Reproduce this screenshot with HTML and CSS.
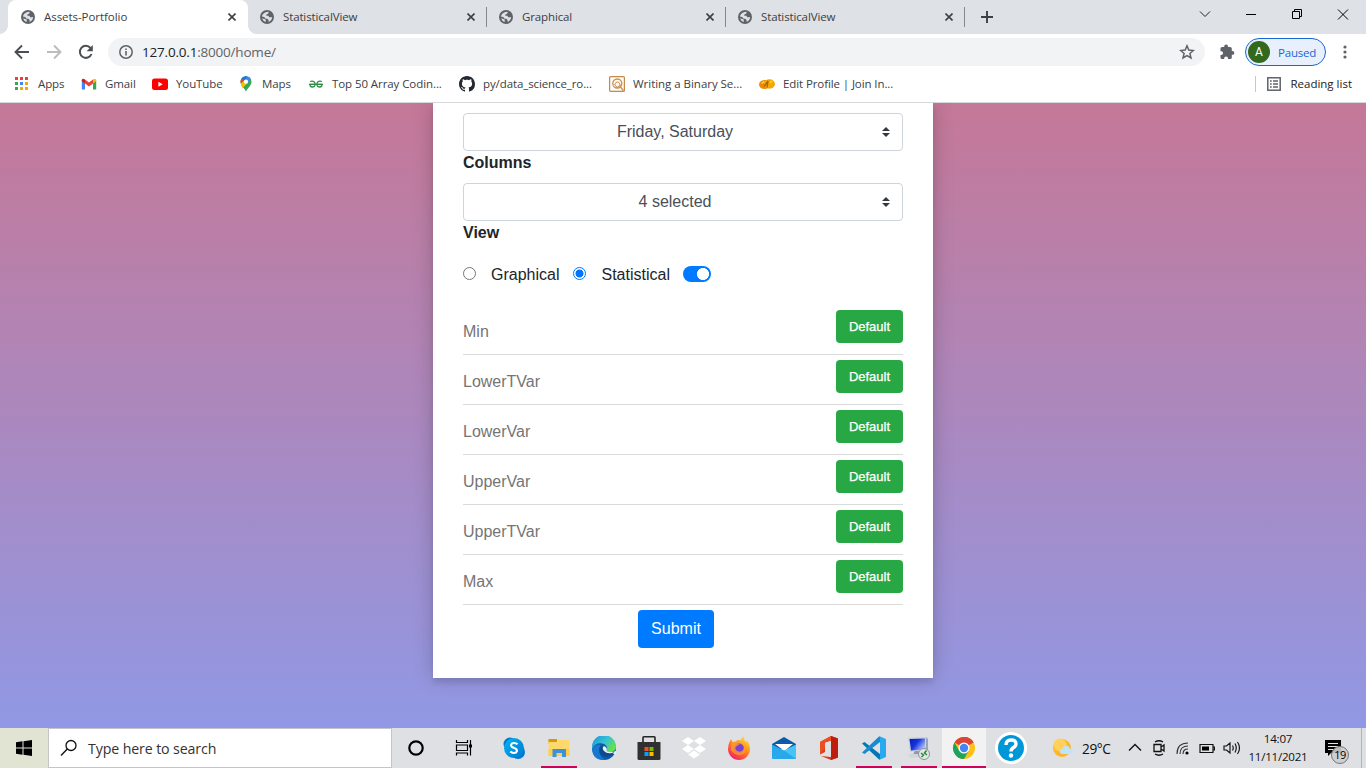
FILE: index.html
```html
<!DOCTYPE html>
<html lang="en">
<head>
<meta charset="utf-8">
<title>Assets-Portfolio</title>
<link rel="stylesheet" href="styles.css">
</head>
<body>
<svg class="defs" width="0" height="0">
  <defs>
    <symbol id="globe" viewBox="0 0 14 14"><circle cx="7" cy="7" r="7" fill="#5f6368"/><path d="M6.600 1.900L8.600 1.800Q8.800 3.600 7.500 4.100L6.300 4.600V5.800H8.300L9.300 7.300H11L12.200 7Q12 10.500 8.600 11.900V10.100L7.200 8.800H5.600L4.200 6.900L1.900 6.500Q2.500 3.200 6.600 1.900ZM2.100 8.200L5.700 9.600V12Q2.900 11.200 2.100 8.200Z" fill="#dee1e6"/></symbol>
    <symbol id="cross" viewBox="0 0 8 8"><path d="M.5.5L7.500 7.500M7.500.5L.5 7.500" stroke="#3c4043" stroke-width="1.600"/></symbol>
    <linearGradient id="sky" x2="1" y2="1"><stop stop-color="#00b7f0"/><stop offset="1" stop-color="#0078d4"/></linearGradient>
    <linearGradient id="edgeTop" x2="1" y2=".6"><stop stop-color="#1b8fd8"/><stop offset=".55" stop-color="#35c1d7"/><stop offset="1" stop-color="#66e04c"/></linearGradient>
    <linearGradient id="fire" x1=".8" y1="0" x2=".2" y2="1"><stop stop-color="#ffe14a"/><stop offset=".45" stop-color="#ff8a1d"/><stop offset="1" stop-color="#f5156c"/></linearGradient>
    <linearGradient id="screen" x2="1" y2=".6"><stop stop-color="#0a1bb5"/><stop offset=".5" stop-color="#1733dc"/><stop offset="1" stop-color="#a9bdf5"/></linearGradient>
  </defs>
</svg>
<div class="desktop">
  <header class="tabstrip">
    <div class="tab tab-active"><svg class="favicon"><use href="#globe"/></svg><span class="tab-title t-assets">Assets-Portfolio</span><svg class="tab-close"><use href="#cross"/></svg></div>
    <div class="tab"><svg class="favicon"><use href="#globe"/></svg><span class="tab-title">StatisticalView</span><svg class="tab-close"><use href="#cross"/></svg></div>
    <div class="tab"><svg class="favicon"><use href="#globe"/></svg><span class="tab-title">Graphical</span><svg class="tab-close"><use href="#cross"/></svg></div>
    <div class="tab"><svg class="favicon"><use href="#globe"/></svg><span class="tab-title">StatisticalView</span><svg class="tab-close"><use href="#cross"/></svg></div>
    <svg class="new-tab" viewBox="0 0 12 12"><path d="M6 0V12M0 6H12" stroke="#3c4043" stroke-width="1.900"/></svg>
    <div class="window-controls">
      <svg viewBox="0 0 46 28"><path d="M18 11.500L23 16.500L28 11.500" fill="none" stroke="#222" /></svg>
      <svg viewBox="0 0 46 28"><path d="M18 14.500H28" stroke="#000"/></svg>
      <svg viewBox="0 0 46 28"><path d="M18.500 11.500H25.500V18.500H18.500ZM20.500 11.500V9.500H27.500V16.500H25.500" fill="none" stroke="#000"/></svg>
      <svg viewBox="0 0 46 28"><path d="M18 9.500L28 19.500M28 9.500L18 19.500" stroke="#000"/></svg>
    </div>
  </header>

  <nav class="toolbar">
    <svg class="nav-icon" viewBox="0 0 16 16"><path d="M15 8H2M8 1.500L1.500 8L8 14.500" fill="none" stroke="#4b4f53" stroke-width="1.900"/></svg>
    <svg class="nav-icon" viewBox="0 0 16 16"><path d="M1 8H14M8 1.500L14.500 8L8 14.500" fill="none" stroke="#babcbe" stroke-width="1.900"/></svg>
    <svg class="nav-icon" viewBox="0 0 16 16"><path d="M13.500 10A6 6 0 1 1 12.500 4" fill="none" stroke="#4b4f53" stroke-width="2"/><path d="M14.800 1V7.200H8.600Z" fill="#4b4f53"/></svg>
    <div class="omnibox">
      <svg class="info" viewBox="0 0 14 14"><circle cx="7" cy="7" r="6.200" fill="none" stroke="#5f6368" stroke-width="1.500"/><path d="M7 6V10.500M7 3.500V5" stroke="#5f6368" stroke-width="1.600"/></svg>
      <span class="url">127.0.0.1<span class="url-path">:8000/home/</span></span>
      <svg class="star" viewBox="0 0 16 16"><path d="M8 1.800L9.800 6.100L14.400 6.500L10.900 9.500L12 14L8 11.600L4 14L5.100 9.500L1.600 6.500L6.200 6.100Z" fill="none" stroke="#5f6368" stroke-width="1.500"/></svg>
    </div>
    <svg class="puzzle" viewBox="0 0 16 16"><path d="M1.500 4.500Q1.500 3 3 3H5.200V2.400A1.900 1.900 0 0 1 9 2.400V3H11.200Q12.800 3 12.800 4.500V7H13.400A1.900 1.900 0 0 1 13.400 10.800H12.800V13.500Q12.800 15 11.200 15H9V14.300A1.900 1.900 0 0 0 5.200 14.300V15H3Q1.500 15 1.500 13.500V11H2.200A1.900 1.900 0 0 0 2.200 7.200H1.500Z" fill="#5f6368"/></svg>
    <div class="profile"><span class="avatar">A</span><span class="paused">Paused</span></div>
    <svg class="kebab" viewBox="0 0 4 14"><g fill="#5f6368"><circle cx="2" cy="2" r="1.600"/><circle cx="2" cy="7" r="1.600"/><circle cx="2" cy="12" r="1.600"/></g></svg>
  </nav>

  <nav class="bookmarks">
    <div class="bookmark b-apps"><svg viewBox="0 0 16 16"><g fill="#ea4335"><path d="M1 1h3v3H1zM6 1h3v3H6zM11 1h3v3h-3z"/></g><path d="M1 6h3v3H1zM1 11h3v3H1z" fill="#34a853"/><path d="M6 6h3v3H6z" fill="#4285f4"/><path d="M11 6h3v3h-3zM6 11h3v3H6zM11 11h3v3h-3z" fill="#f4a900"/></svg><span>Apps</span></div>
    <div class="bookmark b-gmail"><svg viewBox="0 0 16 16"><path d="M.8 4V13.500H4V7Z" fill="#4285f4"/><path d="M12 7V13.500H15.200V4Z" fill="#34a853"/><path d="M4 3.500L8 6.600L12 3.500V7.600L8 10.600L4 7.600Z" fill="#ea4335"/><path d="M.8 5.200V4Q1.500 1.700 4 3.500V7.600Z" fill="#c5221f"/><path d="M15.200 5.200V4Q14.500 1.700 12 3.500V7.600Z" fill="#fbbc04"/></svg><span>Gmail</span></div>
    <div class="bookmark b-youtube"><svg viewBox="0 0 16 16"><rect y="2.500" width="16" height="11.500" rx="2.500" fill="#f00"/><path d="M6.400 5.800V10.700L10.700 8.250Z" fill="#fff"/></svg><span>YouTube</span></div>
    <div class="bookmark b-maps"><svg viewBox="0 0 16 16"><path d="M8 16C7.400 12.500 2.500 10 2.500 5.700A5.500 5.500 0 0 1 13.500 5.700C13.500 10 8.600 12.500 8 16Z" fill="#34a853"/><path d="M2.800 7.600A5.600 5.600 0 0 1 3.700 2.200L6.400 4.500Z" fill="#ea4335"/><path d="M3.700 2.200A5.500 5.500 0 0 1 9.700.5L6.400 4.500Z" fill="#1a73e8"/><path d="M9.700.5A5.500 5.500 0 0 1 12.900 3.200L9.500 7.200L6.400 4.500Z" fill="#4285f4"/><path d="M9.500 7.200L4.500 12Q2.900 9.500 2.800 7.600L6.400 4.500Z" fill="#fbbc04"/><circle cx="8" cy="5.700" r="2.100" fill="#fff"/></svg><span>Maps</span></div>
    <div class="bookmark b-array"><svg viewBox="0 0 16 16"><path d="M2 5.500C5.500 4.500 7.500 6 7 9C6.500 12 2 11.500 2 8.400H14C14 11.500 9.500 12 9 9C8.500 6 10.500 4.500 14 5.500" fill="none" stroke="#2f8d46" stroke-width="1.300"/><path d="M1 8.300H15" stroke="#2f8d46" stroke-width="1.100"/></svg><span>Top 50 Array Codin...</span></div>
    <div class="bookmark b-github"><svg viewBox="0 0 16 16"><path fill="#24292f" d="M8 0C3.580 0 0 3.580 0 8c0 3.540 2.290 6.530 5.470 7.590.4.070.55-.17.550-.380 0-.190-.010-.820-.010-1.490-2.010.370-2.530-.490-2.690-.940-.090-.230-.480-.940-.820-1.130-.280-.150-.680-.520-.010-.530.630-.010 1.080.580 1.230.820.720 1.210 1.870.870 2.330.660.070-.520.280-.870.510-1.070-1.780-.2-3.640-.890-3.640-3.950 0-.870.310-1.590.820-2.150-.080-.2-.360-1.020.080-2.120 0 0 .670-.210 2.200.820.640-.180 1.320-.270 2-.270s1.360.090 2 .270c1.530-1.040 2.200-.820 2.200-.820.440 1.100.160 1.920.080 2.120.510.560.820 1.270.820 2.150 0 3.070-1.870 3.750-3.650 3.950.290.250.540.730.540 1.480 0 1.070-.010 1.930-.010 2.200 0 .210.150.460.550.380A8 8 0 0 0 16 8c0-4.420-3.580-8-8-8"/></svg><span>py/data_science_ro...</span></div>
    <div class="bookmark b-writing"><svg viewBox="0 0 16 16"><rect x=".6" y=".6" width="14.800" height="14.800" rx="1" fill="#fffaf3" stroke="#bf8a4c" stroke-width="1.200"/><circle cx="8.300" cy="7.500" r="4.500" fill="none" stroke="#c79150" stroke-width="1.300"/><path d="M10 10.500A2.500 2.500 0 1 1 10.500 7Q10.500 11 15 14.500M10 9L14 15" fill="none" stroke="#c79150"/></svg><span>Writing a Binary Se...</span></div>
    <div class="bookmark b-edit"><svg viewBox="0 0 16 16"><ellipse cx="5.500" cy="8.500" rx="5.500" ry="4.500" fill="#ed8b00"/><ellipse cx="10.500" cy="8" rx="5.500" ry="4.700" fill="#f5a800"/><path d="M5 10.500L9 5L8 11.500" stroke="#a76400" stroke-width="1.300" fill="none"/><path d="M2.500 7.500L5.500 5.500M11 6.500L13 5.500" stroke="#ffd33d" stroke-width="1.500"/></svg><span>Edit Profile | Join In...</span></div>
    <div class="reading"><svg viewBox="0 0 14 14"><rect x=".8" y=".8" width="12.400" height="12.400" fill="none" stroke="#5f6368" stroke-width="1.500"/><path d="M3 4H4.700M3 7H4.700M3 10H4.700M6 4H11M6 7H11M6 10H11" stroke="#5f6368" stroke-width="1.400"/></svg><span>Reading list</span></div>
  </nav>

  <main class="page">
    <form class="card">
      <button type="button" class="select">Friday, Saturday<svg viewBox="0 0 4 5"><path fill="#343a40" d="M2 0L0 2h4zm0 5L0 3h4z"/></svg></button>
      <div class="label">Columns</div>
      <button type="button" class="select">4 selected<svg viewBox="0 0 4 5"><path fill="#343a40" d="M2 0L0 2h4zm0 5L0 3h4z"/></svg></button>
      <div class="label">View</div>
      <div class="choices"><i class="radio"></i><span class="c-graph">Graphical</span><i class="radio checked"></i><span class="c-stat">Statistical</span><i class="switch"></i></div>
      <div class="fields">
        <div class="field"><span>Min</span><button type="button" class="default">Default</button></div>
        <div class="field"><span>LowerTVar</span><button type="button" class="default">Default</button></div>
        <div class="field"><span>LowerVar</span><button type="button" class="default">Default</button></div>
        <div class="field"><span>UpperVar</span><button type="button" class="default">Default</button></div>
        <div class="field"><span>UpperTVar</span><button type="button" class="default">Default</button></div>
        <div class="field"><span>Max</span><button type="button" class="default">Default</button></div>
      </div>
      <button type="button" class="submit">Submit</button>
    </form>
  </main>

  <footer class="taskbar">
    <div class="start"><svg viewBox="0 0 16 16"><path d="M0 2.200L6.500 1.300V7.500H0ZM7.500 1.150L16 0V7.500H7.500ZM0 8.500H6.500V14.700L0 13.800ZM7.500 8.500H16V16L7.500 14.850Z"/></svg></div>
    <div class="search"><svg viewBox="0 0 18 18"><circle cx="11" cy="6.500" r="5" fill="none" stroke="#111" stroke-width="1.300"/><path d="M7.300 10L1 16.500" stroke="#111" stroke-width="1.400"/></svg><span>Type here to search</span></div>
    <div class="sys-cell"><svg viewBox="0 0 24 24"><circle cx="12" cy="12" r="6.700" fill="none" stroke="#000" stroke-width="2.200"/></svg></div>
    <div class="sys-cell sys-view"><svg viewBox="0 0 24 24"><path d="M4.500 4V6.500H15.500V4M4.500 19.500V17H15.500V19.500M4.500 9H15.500V14.500H4.500ZM18.500 4V19.500" fill="none" stroke="#000" stroke-width="1.200"/><path d="M17 8.500H20V11.500H17Z"/></svg></div>
    <div class="app"><svg viewBox="0 0 24 24"><circle cx="8" cy="8" r="6.500" fill="#0078d4"/><circle cx="16" cy="16" r="7" fill="#0078d4"/><circle cx="12" cy="12" r="10" fill="url(#sky)"/><path d="M15.500 8.300Q14 6.900 11.800 7C9 7.100 8.100 9.800 10 11L13.500 12.600C16 14 15 16.900 12 17Q9.800 17.100 8.300 15.600" fill="none" stroke="#fff" stroke-width="2.100"/></svg></div>
    <div class="app running"><svg viewBox="0 0 24 24"><path d="M1.500 3H10V8H1.500Z" fill="#d99a00"/><path d="M1.500 6H10L11.500 4H22.500V20H1.500Z" fill="#ffd86b"/><path d="M1.500 13H22.500V20H1.500Z" fill="#ffcf4c"/><path d="M5.500 21V13H19V21H15V17H9.500V21Z" fill="#3c91d8"/></svg></div>
    <div class="app"><svg viewBox="0 0 24 24"><circle cx="12" cy="12" r="12" fill="#0c59a4"/><path d="M0 11A12 12 0 0 1 24 11C24 16 18 17 14 15C17 12 14 8 10 7.500Q3 6.500 0 13Z" fill="url(#edgeTop)"/><path d="M0 13Q4 7 9 9C5 13 7 21 14 23.500Q1 26 0 13Z" fill="#1678d1"/><path d="M10.500 10C9 15 15 19 22 17C18 23 7 21 7.500 14Q8 10.500 10.500 10Z" fill="#114a8b"/><path d="M12 10Q9.500 12 12 15Q16 19 22.500 16L21 18L24 18V15Q19 17 14.500 15Q16 12 12 10Z" fill="#e5f4f7"/></svg></div>
    <div class="app"><svg viewBox="0 0 24 24"><path d="M6 8V1.500Q6 .8 6.800.8H17.200Q18 .8 18 1.500V8" fill="none" stroke="#252525" stroke-width="1.600"/><path d="M.5 6H23.500V22.500Q23.500 24 22 24H2Q.5 24 .5 22.500Z" fill="#303030"/><path d="M7.500 11H11.500V15H7.500Z" fill="#f25022"/><path d="M12.500 11H16.500V15H12.500Z" fill="#7fba00"/><path d="M7.500 16H11.500V20H7.500Z" fill="#00a4ef"/><path d="M12.500 16H16.500V20H12.500Z" fill="#ffb900"/></svg></div>
    <div class="app"><svg viewBox="0 0 24 24"><path d="M6 1L12 5L6 9L0 5ZM18 1L24 5L18 9L12 5ZM6 9L12 13L6 17L0 13ZM18 9L24 13L18 17L12 13ZM12 14.500L18 18.500L12 22.500L6 18.500Z" fill="#fff"/></svg></div>
    <div class="app"><svg viewBox="0 0 24 24"><path d="M2.500 6L4 3L5.500 6L9 5.500C10 4 12 3 13.500 4.500Q14 2 16.500 0Q17 4 19 6L20 4.500Q23 8 23 13A11 11 0 0 1 1 13Q1 9 2.500 6Z" fill="url(#fire)"/><circle cx="12" cy="12.500" r="5" fill="#7b3fd8"/><path d="M4 7Q7 5 9 7L13 8L10 10Q7 12 9.500 14.500Q13 17 16 14Q18 11 15.500 8Q20 9 19 14C17 21 7 20 4 14Z" fill="#ff9f24" opacity=".75"/></svg></div>
    <div class="app"><svg viewBox="0 0 24 24"><path d="M0 8L12 1L24 8V13H0Z" fill="#0c5aa8"/><path d="M3 8H21L12.500 15Z" fill="#fff"/><path d="M0 8.500L13 15L0 23Z" fill="#28a8ea"/><path d="M24 8.500V23H0L12 14.500Z" fill="#45c4f5"/><path d="M0 23L12 14.500L24 23Z" fill="#28a8ea"/></svg></div>
    <div class="app"><svg viewBox="0 0 24 24"><path d="M3 6L14 0L21 2.500V21.500L14 24L4 20L14 21V4.500L8 6.500V16L3 18.500Z" fill="#db3a1a"/><path d="M14 0L21 2.500V21.500L14 24Z" fill="#bd1e0d"/><path d="M3 6L14 0V4.500L8 6.500V12L3 18.500Z" fill="#e94f20"/></svg></div>
    <div class="app running"><svg viewBox="0 0 24 24"><path d="M0 7.500L2.500 6L18 18V23.500H17Z" fill="#0078b8"/><path d="M0 16.500L2.500 18L18 6V.5H17Z" fill="#168bd1"/><path d="M17 0L24 3V21L17 24Q18 23.500 18 22V2Q18 .5 17 0Z" fill="#29aaf0"/></svg></div>
    <div class="app running"><svg viewBox="0 0 24 24"><path d="M1 1.500L19 1V15L3 16Z" fill="#c9d2dd"/><path d="M2.500 3L18 2.500V13.500L4 14.500Z" fill="url(#screen)"/><path d="M19 1L21 3V15L19 15Z" fill="#9ba6b4"/><path d="M8 15L13 15V18L16 20H5Z" fill="#9299a3"/><path d="M1 18L12 18L14 21L3 22Z" fill="#d2d6dc"/><circle cx="17" cy="18" r="5.500" fill="#e4e7ea" stroke="#8b9299"/><path d="M14 17L16.500 19L14.500 21M19.500 14.500L17.500 17L20 19" fill="none" stroke="#238a31" stroke-width="1.500"/></svg></div>
    <div class="app chrome running"><svg viewBox="0 0 24 24"><circle cx="12" cy="12" r="11" fill="#fbc116"/><path d="M12 12L2.470 6.500A11 11 0 0 1 21.530 6.500Z" fill="#db4437"/><path d="M12 6.500H21.500Q19 1 12 1Z" fill="#db4437"/><path d="M2.470 6.500A11 11 0 0 0 12 23L16.760 14.750L12 12L7.240 14.750Z" fill="#1da260"/><circle cx="12" cy="12" r="5.500" fill="#fff"/><circle cx="12" cy="12" r="4.200" fill="#4285f4"/></svg></div>
    <div class="help"><svg viewBox="0 0 32 32"><circle cx="16" cy="16" r="16" fill="#fff"/><circle cx="16" cy="16" r="13" fill="#0097d8"/><path d="M11 13Q11 8 16 8Q21 8 21 12Q21 14 18.500 15.500Q16 17 16 19.500" fill="none" stroke="#fff" stroke-width="3.400"/><circle cx="16" cy="23.500" r="2.200" fill="#fff"/></svg></div>
    <div class="weather"><svg viewBox="0 0 20 20"><circle cx="9" cy="10" r="9" fill="#fdb62b"/><circle cx="7" cy="7" r="6.500" fill="#ffd15a"/><path d="M10 16Q6.500 16 7 13Q7.500 11 9.500 11Q11 6 15 8Q16.500 9 16.500 10.500Q20 10.500 20 13.500Q19.500 16 17 16Z" fill="#bfe3fb"/></svg><span>29°C</span></div>
    <div class="tray">
      <svg viewBox="0 0 16 16"><path d="M2 10.500L8 4.500L14 10.500" fill="none" stroke="#111" stroke-width="1.400"/></svg>
      <svg viewBox="0 0 16 16"><path d="M3 4.500H10V11.500H3ZM10 7L13 5V11L10 9M4 2Q8-.5 12 2M4 14Q8 16.500 12 14" fill="none" stroke="#111" stroke-width="1.300"/></svg>
      <svg viewBox="0 0 16 16"><path d="M2 14Q2 3 13 3M5 14Q5 6 13 6M8 14Q8 9 13 9" fill="none" stroke="#333" stroke-width="1.100"/><circle cx="12" cy="13" r="1.600"/></svg>
      <svg viewBox="0 0 16 16"><path d="M1 4.500H14V12.500H1ZM14 7H15.500V10H14" fill="none" stroke="#111" stroke-width="1.200"/><path d="M3 6.500H10V10.500H3Z"/></svg>
      <svg class="volume" viewBox="0 0 18 16"><path d="M1 6H3.500L7 3V13L3.500 10H1ZM9.500 5.500Q11 8 9.500 10.500M12 3.500Q14.500 8 12 12.500M14.500 2Q18.500 8 14.500 14" fill="none" stroke="#111" stroke-width="1.150"/></svg>
    </div>
    <div class="clock"><span class="time">14:07</span><span class="date">11/11/2021</span></div>
    <div class="notify"><svg viewBox="0 0 16 16"><path d="M0 0H16V13H6L3 16V13H0Z"/><path d="M3 3.500H13M3 6.500H13M3 9.500H9" stroke="#e3e3e5" stroke-width="1.200"/></svg><span class="badge">19</span></div>
    <div class="peek"></div>
  </footer>
</div>
</body>
</html>
```
FILE: styles.css
```css
* { box-sizing: border-box; }
body { margin: 0; overflow: hidden; font-family: "Open Sans", "Noto Sans", sans-serif; font-size: 11.500px; color: #3c4043; }
svg { display: block; flex: none; }
.defs { position: absolute; }
.desktop { width: 1366px; height: 768px; display: flex; flex-direction: column; background: #fff; }

.tabstrip { height: 34px; flex: none; display: flex; background: #dee1e6; padding-left: 8px; }
.tab { width: 239px; height: 34px; display: flex; align-items: center; padding: 0 12px; position: relative; }
.tab:not(.tab-active)::after { content: ""; position: absolute; right: 0; top: 7px; width: 1px; height: 20px; background: #85888c; }
.tab-active { width: 240px; background: #fff; border-radius: 8px 8px 0 0; padding: 0 12px 0 13px; }
.tab-active::before, .tab-active::after { content: ""; position: absolute; bottom: 0; width: 8px; height: 8px; }
.tab-active::before { left: -8px; background: radial-gradient(circle at 0 0, #dee1e6 7.500px, #fff 8px); }
.tab-active::after { right: -8px; background: radial-gradient(circle at 100% 0, #dee1e6 7.500px, #fff 8px); }
.favicon { width: 14px; height: 14px; margin-right: 9px; }
.tab-title { flex: 1; white-space: nowrap; line-height: 16px; letter-spacing: -.13px; }
.t-assets { letter-spacing: -.05px; }
.tab-close { width: 8px; height: 8px; }
.new-tab { width: 12px; height: 12px; margin: 11px 0 0 16px; }
.window-controls { display: flex; margin-left: auto; }
.window-controls svg { width: 46px; height: 28px; }

.toolbar { height: 36px; flex: none; display: flex; align-items: center; padding-left: 14px; }
.nav-icon { width: 16px; height: 16px; margin-right: 16px; }
.omnibox { width: 1097px; height: 28px; margin-left: -2px; background: #f1f3f4; border-radius: 14px; display: flex; align-items: center; padding: 0 10px 0 11px; }
.info { width: 14px; height: 14px; margin-right: 9px; }
.url { flex: 1; font-size: 13.500px; letter-spacing: -.2px; color: #202124; }
.url-path { color: #5f6368; }
.star { width: 16px; height: 16px; }
.puzzle { width: 16px; height: 16px; margin: 0 10px 0 14px; }
.profile { width: 81px; height: 28px; border: 1px solid #1967d2; border-radius: 14px; background: #e8f0fe; display: flex; align-items: center; padding-left: 2px; }
.avatar { width: 22px; height: 22px; border-radius: 50%; background: #33691e; color: #fff; font: 12px/22px Roboto, sans-serif; text-align: center; margin-right: 8px; }
.paused { color: #1967d2; font-size: 11.500px; letter-spacing: -.2px; }
.kebab { width: 4px; height: 14px; margin-left: 17px; }

.bookmarks { height: 33px; flex: none; display: flex; align-items: center; padding: 0 14px 5px; border-bottom: 1px solid #d6d8db; white-space: nowrap; }
.bookmark { display: flex; align-items: center; gap: 8px; letter-spacing: -.1px; }
.bookmark svg { width: 16px; height: 16px; }
.b-apps { width: 67px; }
.b-gmail { width: 71px; }
.b-youtube { width: 86px; }
.b-maps { width: 70px; }
.b-github, .b-writing { width: 150px; }
.b-writing { letter-spacing: -.03px; }
.b-array { width: 151px; letter-spacing: -.08px; }
.reading { display: flex; align-items: center; gap: 9px; margin-left: auto; height: 16px; padding-left: 11px; border-left: 1px solid #c6c8cb; color: #202124; }
.reading svg { width: 14px; height: 14px; }

.page { height: 625px; flex: none; overflow: hidden; display: flex; justify-content: center; align-items: flex-start; background: linear-gradient(#c57897, #9198e5); }
.card { width: 500px; height: 575px; background: #fff; padding: 10px 30px 30px; box-shadow: 0 0 20px rgba(0, 0, 0, .2), 0 5px 5px rgba(0, 0, 0, .08); font: 16px/24px "Liberation Sans", Arial, sans-serif; color: #212529; }
.select { display: flex; justify-content: center; align-items: center; position: relative; width: 440px; height: 38px; background: #fff; border: 1px solid #ced4da; border-radius: 4px; font: inherit; color: #495057; padding: 0 28px 0 12px; }
.select svg { position: absolute; right: 12px; top: 13px; width: 8px; height: 10px; }
.label { font-weight: 700; height: 32px; line-height: 23px; }
.choices { height: 42px; display: flex; align-items: center; padding-top: 1px; }
.radio { width: 13px; height: 13px; border: 1px solid #767676; border-radius: 50%; background: #fff; margin-top: -2px; }
.radio.checked { border-color: #0075ff; background: radial-gradient(circle, #0075ff 3.700px, #fff 4.300px); }
.c-graph { margin: 0 14px 0 15px; }
.c-stat { margin: 0 13px 0 15px; }
.switch { width: 28px; height: 16px; margin-top: -1px; border-radius: 8px; background: radial-gradient(circle at 20px 8px, #fff 5.700px, #007bff 6.300px); }
.fields { margin-top: 10px; }
.field { height: 50px; display: flex; justify-content: space-between; align-items: flex-start; border-bottom: 1px solid #dadada; padding-top: 5px; color: #757575; }
.field span { padding-top: 10px; }
.default { width: 67px; height: 33px; border: 0; border-radius: 4px; background: #28a745; color: #fff; font: 500 13px "Liberation Sans", Arial, sans-serif; padding: 0; -webkit-text-stroke: .25px #fff; }
.submit { display: block; width: 76px; height: 38px; margin: 5px 0 0 175px; border: 0; border-radius: 4px; background: #007bff; color: #fff; font: inherit; padding: 0; }

.taskbar { height: 40px; flex: none; display: flex; background: #dfe0e3; color: #111; }
.taskbar > * { flex: none; }
.start { width: 48px; background: #e1e4d2; display: flex; align-items: center; justify-content: center; }
.start svg { width: 16px; height: 16px; }
.search { width: 344px; background: #fff; border: 1px solid #c5c5c9; display: flex; align-items: center; gap: 10px; padding-left: 11px; font-size: 14.200px; color: #333; letter-spacing: -.12px; }
.search svg { width: 18px; height: 18px; }
.sys-cell { width: 48px; display: flex; align-items: center; justify-content: center; }
.sys-view { width: 51px; padding-right: 4px; }
.sys-cell svg, .app svg { width: 24px; height: 24px; }
.app { width: 45px; display: flex; align-items: center; justify-content: center; position: relative; }
.running::after { content: ""; position: absolute; left: 5px; bottom: 0; width: 36px; height: 2px; background: #d1005b; }
.chrome { width: 44px; margin-left: 1px; background: #f2f2f3; }
.chrome::after { left: 0; width: 44px; }
.help { width: 50px; display: flex; align-items: center; justify-content: center; }
.help svg { width: 32px; height: 32px; }
.weather { width: 90px; padding-left: 17px; display: flex; align-items: center; gap: 9px; font-size: 13.700px; letter-spacing: -.4px; }
.weather svg { width: 20px; height: 20px; }
.tray { display: flex; align-items: center; gap: 8px; width: 122px; padding-left: 1px; }
.tray svg { width: 16px; height: 16px; }
.tray .volume { width: 18px; }
.clock { width: 60px; display: flex; flex-direction: column; align-items: center; line-height: 18px; padding-top: 2px; font-size: 11.600px; letter-spacing: -.25px; }
.notify { width: 53px; padding: 12px 0 0 17px; position: relative; }
.notify svg { width: 16px; height: 16px; }
.badge { position: absolute; left: 23px; top: 18px; width: 18px; height: 18px; border: 1px solid #777; border-radius: 50%; background: rgba(205, 205, 208, .9); color: #000; font-size: 11px; line-height: 15px; text-align: center; letter-spacing: -.5px; }
.peek { margin-left: auto; width: 5px; border-left: 1px solid #b5b5b9; }
```
